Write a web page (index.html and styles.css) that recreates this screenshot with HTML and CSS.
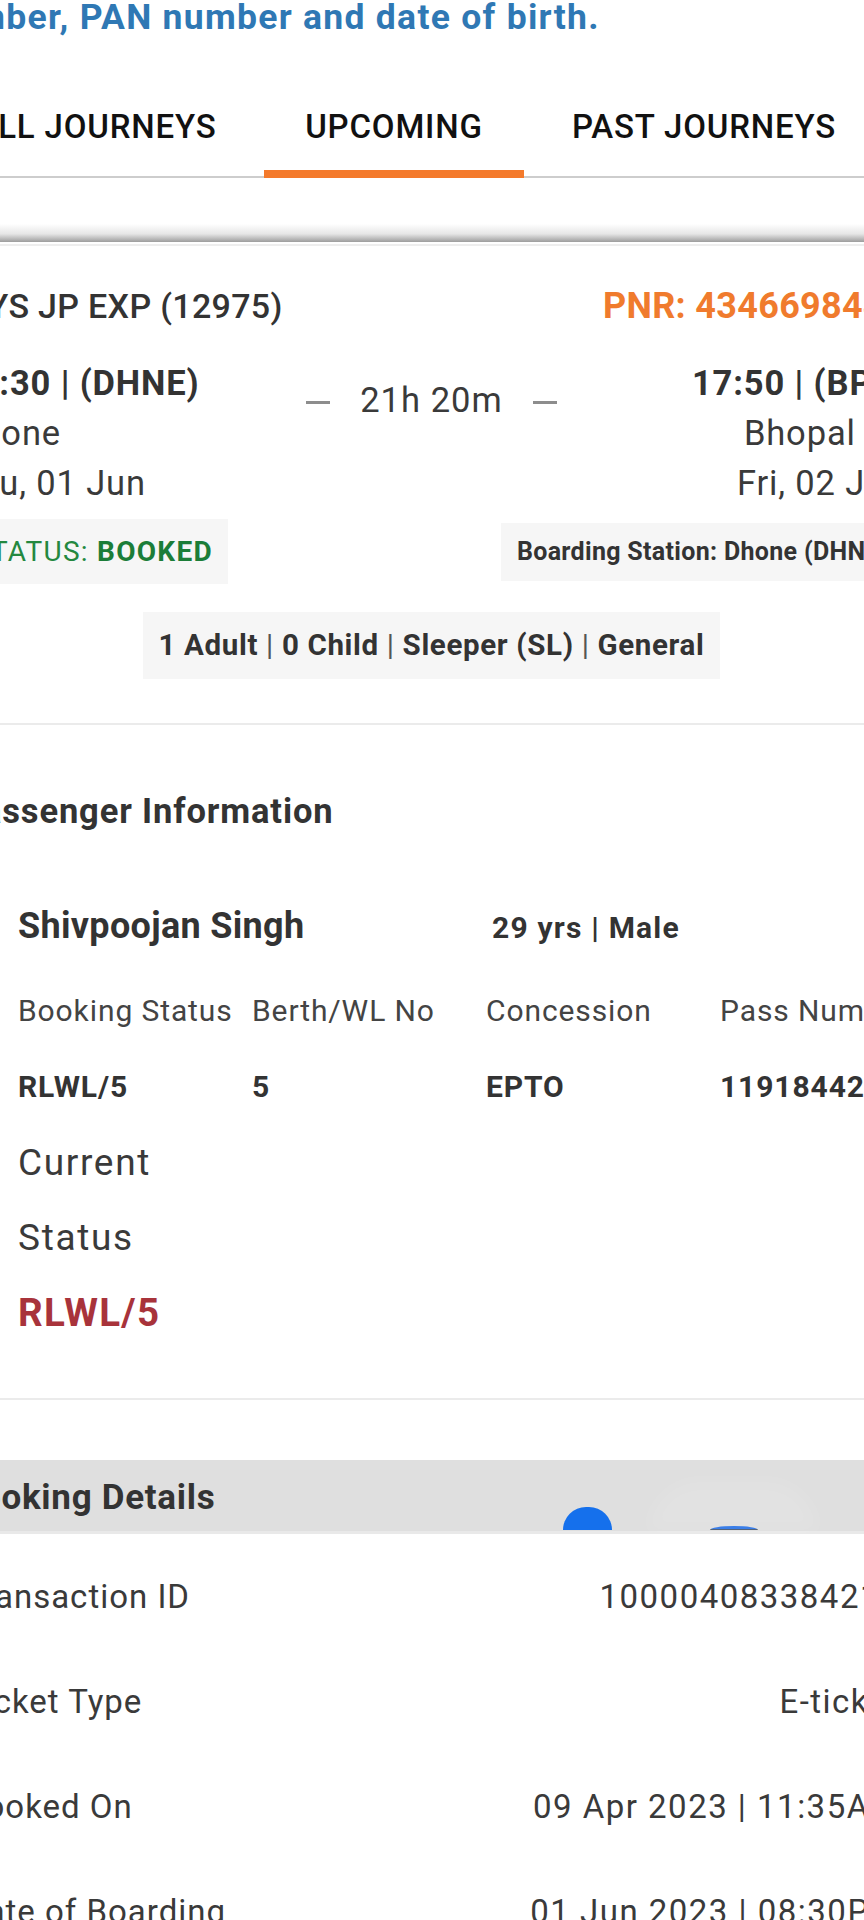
FILE: index.html
```html
<!DOCTYPE html>
<html lang="en">
<head>
<meta charset="utf-8">
<title>My Bookings</title>
<link rel="stylesheet" href="styles.css">
</head>
<body>
<main class="page">
  <p class="intro">number, PAN number and date of birth.</p>

  <nav class="tabs">
    <div class="tab tab-all">ALL JOURNEYS</div>
    <div class="tab tab-up active">UPCOMING</div>
    <div class="tab tab-past">PAST JOURNEYS</div>
  </nav>

  <div class="shade"></div>
  <div class="shade-line"></div>

  <section class="journey">
    <div class="jr-head">
      <span class="train">MYS JP EXP (12975)</span>
      <span class="pnr">PNR: 4346698440</span>
    </div>

    <div class="jr-route">
      <div class="stn stn-from">
        <div class="time">20:30 | (DHNE)</div>
        <div>Dhone</div>
        <div>Thu, 01 Jun</div>
      </div>
      <div class="dur">
        <span class="dash"></span>
        <span>21h 20m</span>
        <span class="dash"></span>
      </div>
      <div class="stn stn-to">
        <div class="time">17:50 | (BPL)</div>
        <div>Bhopal Jn</div>
        <div>Fri, 02 Jun</div>
      </div>
    </div>

    <div class="jr-status">
      <div class="status-box">STATUS: <b>BOOKED</b></div>
      <div class="board-box">Boarding Station: Dhone (DHNE)</div>
    </div>

    <div class="pax-line">
      <div class="pax-box">1 Adult <span class="pipe">|</span> 0 Child <span class="pipe">|</span> Sleeper (SL) <span class="pipe">|</span> General</div>
    </div>
  </section>

  <div class="divider"></div>

  <h2 class="section-title">Passenger Information</h2>

  <section class="pax-card">
    <div class="pax-name-row">
      <span class="pax-name">Shivpoojan Singh</span>
      <span class="pax-age">29 yrs | Male</span>
    </div>
    <div class="pax-grid">
      <div class="th">Booking Status</div>
      <div class="th">Berth/WL No</div>
      <div class="th">Concession</div>
      <div class="th">Pass Number</div>
      <div class="td">RLWL/5</div>
      <div class="td">5</div>
      <div class="td">EPTO</div>
      <div class="td">119184425</div>
    </div>
    <div class="cur-status">Current Status</div>
    <div class="cur-val">RLWL/5</div>
  </section>

  <div class="divider divider-2"></div>

  <div class="bk-head">
    <span class="bk-title">Booking Details</span>
    <span class="fab-glow"></span>
    <span class="fab-dot"></span>
    <span class="fab-arc"></span>
  </div>

  <section class="bk-rows">
    <div class="bk-row"><span>Transaction ID</span><span class="bk-val">100004083384217</span></div>
    <div class="bk-row"><span>Ticket Type</span><span class="bk-val">E-ticket</span></div>
    <div class="bk-row"><span>Booked On</span><span class="bk-val">09 Apr 2023 | 11:35AM</span></div>
    <div class="bk-row"><span>Date of Boarding</span><span class="bk-val">01 Jun 2023 | 08:30PM</span></div>
  </section>
</main>
</body>
</html>
```

FILE: styles.css
```css
html, body {
  margin: 0;
  padding: 0;
  overflow: hidden;
  background: #ffffff;
}

body {
  font-family: Roboto, "Noto Sans", "Liberation Sans", sans-serif;
  color: #3a3a3a;
  letter-spacing: 0.02em;
}

.page {
  width: 947px;
  margin-left: -42px;
}

/* intro line */
.intro {
  margin: 0 0 0 -26px;
  font-size: 35.5px;
  line-height: 34px;
  font-weight: 700;
  letter-spacing: 0.036em;
  color: #2f78b4;
  white-space: nowrap;
}

/* tabs */
.tabs {
  display: flex;
  margin-left: -30px;
  border-bottom: 2px solid #cdcdcd;
}

.tab {
  flex: none;
  text-align: center;
  padding: 73px 0 23px;
  font-size: 33px;
  line-height: 40px;
  font-weight: 500;
  letter-spacing: 0.025em;
  color: #111111;
  border-bottom: 8px solid transparent;
  margin-bottom: -2px;
  white-space: nowrap;
}

.tab-all { width: 336px; }
.tab-up { width: 260px; }
.tab-past { width: 360px; }

.tab.active { border-bottom-color: #f47a2b; }

.shade {
  margin-top: 46px;
  height: 18px;
  background: linear-gradient(#ffffff, #e6e6e6 55%, #9d9d9d);
}

.shade-line {
  margin-top: 2px;
  height: 2px;
  background: #eeeeee;
}

/* journey card */
.journey {
  padding-top: 38px;
}

.jr-head {
  display: flex;
  justify-content: space-between;
  align-items: baseline;
  line-height: 44px;
  white-space: nowrap;
}

.train {
  font-size: 34px;
  font-weight: 500;
  color: #333333;
}

.pnr {
  font-size: 36px;
  font-weight: 700;
  color: #f07b2d;
}

.jr-route {
  display: grid;
  grid-template-columns: 1fr auto 1fr;
  margin-top: 30px;
  font-size: 34.5px;
  line-height: 50px;
  letter-spacing: 0.025em;
  color: #3a3a3a;
  white-space: nowrap;
}

.time {
  font-weight: 700;
  color: #333333;
}

.stn-to { text-align: right; }

.dur {
  display: flex;
  align-items: center;
  gap: 30px;
  margin-top: 17px;
  height: 50px;
  letter-spacing: 0.03em;
}

.dash {
  width: 24px;
  height: 3px;
  margin-top: 5px;
  background: #8d8d8d;
}

.jr-status {
  display: flex;
  justify-content: space-between;
  align-items: center;
  margin-top: 11px;
  white-space: nowrap;
}

.status-box {
  background: #f6f6f6;
  padding: 13px 15px 12px 15px;
  font-size: 28px;
  line-height: 40px;
  letter-spacing: 0.045em;
  color: #24883f;
}

.status-box b {
  font-weight: 700;
  color: #1b7d38;
}

.board-box {
  background: #f6f6f6;
  padding: 12px 16px;
  font-size: 25px;
  line-height: 34px;
  font-weight: 700;
  color: #333333;
}

.pax-line {
  display: flex;
  justify-content: center;
  margin-top: 28px;
}

.pax-box {
  background: #f6f6f6;
  padding: 13px 16px 14px;
  font-size: 29.5px;
  line-height: 40px;
  font-weight: 700;
  letter-spacing: 0.022em;
  color: #333333;
  white-space: nowrap;
}

.pipe {
  font-weight: 400;
  color: #555555;
}

.divider {
  margin-top: 44px;
  height: 2px;
  background: #ebebeb;
}

.section-title {
  margin: 0;
  padding: 66px 0 0 2px;
  font-size: 34.5px;
  line-height: 40px;
  font-weight: 700;
  letter-spacing: 0.025em;
  color: #333333;
}

/* passenger */
.pax-card {
  padding: 73px 0 0 60px;
}

.pax-name-row {
  display: grid;
  grid-template-columns: 474px auto;
  align-items: baseline;
  line-height: 44px;
  white-space: nowrap;
}

.pax-name {
  font-size: 36px;
  font-weight: 700;
  color: #333333;
}

.pax-age {
  font-size: 30px;
  font-weight: 700;
  letter-spacing: 0.04em;
  color: #333333;
}

.pax-grid {
  display: grid;
  grid-template-columns: repeat(4, 234px);
  row-gap: 36px;
  margin-top: 41px;
  font-size: 30px;
  line-height: 40px;
  letter-spacing: 0.03em;
  white-space: nowrap;
}

.th { color: #444444; }

.td {
  font-weight: 700;
  color: #333333;
}

.cur-status {
  width: 200px;
  margin-top: 18px;
  font-size: 37px;
  line-height: 75px;
  letter-spacing: 0.045em;
  color: #3a3a3a;
}

.cur-val {
  font-size: 38.5px;
  line-height: 75px;
  font-weight: 700;
  letter-spacing: 0.035em;
  color: #a8333b;
}

.divider-2 {
  margin-top: 48px;
}

/* booking details */
.bk-head {
  position: relative;
  margin-top: 60px;
  height: 71px;
  line-height: 76px;
  background: #dfdfdf;
  border-bottom: 3px solid #e9e9e9;
  font-size: 35px;
  font-weight: 700;
  letter-spacing: 0.02em;
  color: #333333;
  white-space: nowrap;
}

.fab-glow {
  position: absolute;
  left: 690px;
  top: 20px;
  width: 170px;
  height: 52px;
  border-radius: 60px 60px 0 0;
  background: rgba(255, 255, 255, 0.1);
  filter: blur(8px);
}

.fab-dot {
  position: absolute;
  left: 605px;
  top: 47px;
  width: 49px;
  height: 23px;
  border-radius: 25px 25px 0 0;
  background: #1570ec;
}

.fab-arc {
  position: absolute;
  left: 752px;
  top: 66px;
  width: 48px;
  height: 3px;
  border-radius: 24px 24px 0 0 / 4px 4px 0 0;
  background: #3a7ee8;
  border-bottom: 1px solid #55647a;
}

.bk-rows {
  padding: 10px 5px 0 6px;
  font-size: 33px;
  letter-spacing: 0.03em;
  color: #3a3a3a;
}

.bk-row {
  display: flex;
  justify-content: space-between;
  height: 105px;
  line-height: 105px;
  white-space: nowrap;
}

.bk-val {
  letter-spacing: 0.045em;
}
```
